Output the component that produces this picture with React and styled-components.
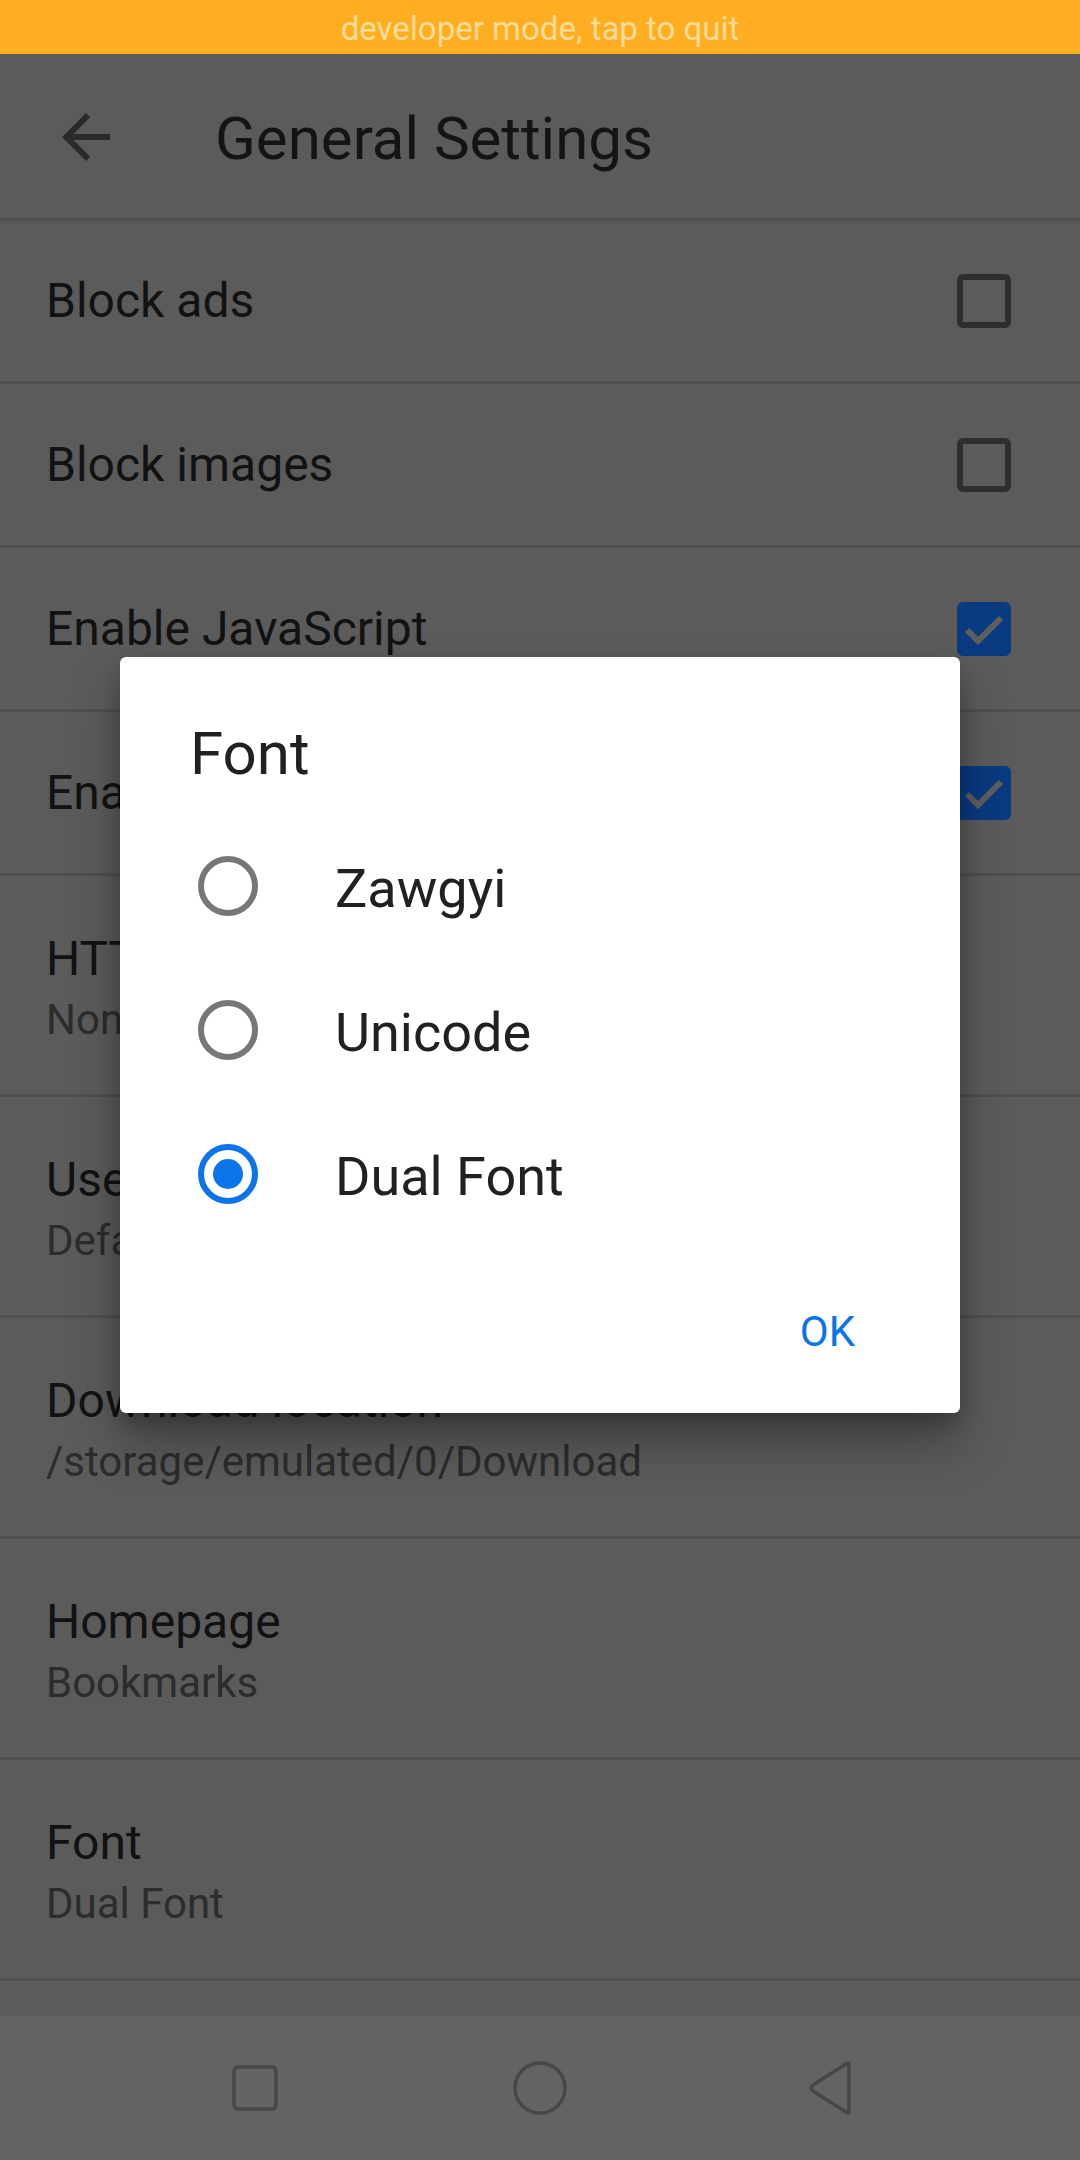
import React, { useState } from "react";
import styled, { createGlobalStyle } from "styled-components";

const GlobalStyle = createGlobalStyle`
  html, body {
    margin: 0;
    padding: 0;
    background: #5b5b5b;
  }
  * {
    box-sizing: border-box;
  }
  body {
    font-family: Roboto, "Noto Sans", "Liberation Sans", sans-serif;
  }
`;

const rows = [
  { title: "Block ads", checked: false },
  { title: "Block images", checked: false },
  { title: "Enable JavaScript", checked: true },
  { title: "Enable cookies", checked: true },
  { title: "HTTP proxy", summary: "None" },
  { title: "User agent", summary: "Default" },
  { title: "Download location", summary: "/storage/emulated/0/Download" },
  { title: "Homepage", summary: "Bookmarks" },
  { title: "Font", summary: "Dual Font" },
];

const fonts = ["Zawgyi", "Unicode", "Dual Font"];

const BackArrow = () => (
  <svg width="72" height="72" viewBox="0 0 24 24">
    <path
      fill="#2a2a2a"
      d="M20 11H7.83l5.59-5.59L12 4l-8 8 8 8 1.41-1.41L7.83 13H20v-2z"
    />
  </svg>
);

const CheckMark = () => (
  <svg width="42" height="42" viewBox="0 0 42 42">
    <polyline
      points="4,22 15,33 38,10"
      fill="none"
      stroke="#5e5e5e"
      strokeWidth="6"
    />
  </svg>
);

const App = () => {
  const [font, setFont] = useState("Dual Font");

  return (
    <Screen>
      <GlobalStyle />
      <DevBar>developer mode, tap to quit</DevBar>
      <Toolbar>
        <IconButton>
          <BackArrow />
        </IconButton>
        <Title>General Settings</Title>
      </Toolbar>
      <List>
        {rows.map((row) => (
          <Row key={row.title} tall={!!row.summary}>
            <RowText>
              <RowTitle>{row.title}</RowTitle>
              {row.summary && <RowSummary>{row.summary}</RowSummary>}
            </RowText>
            {row.checked !== undefined && (
              <Checkbox checked={row.checked}>
                {row.checked && <CheckMark />}
              </Checkbox>
            )}
          </Row>
        ))}
      </List>
      <NavBar>
        <NavKey space={185}>
          <svg width="48" height="48" viewBox="0 0 48 48">
            <rect x="3" y="3" width="42" height="42" rx="4" fill="none" stroke="#474747" strokeWidth="3.5" />
          </svg>
        </NavKey>
        <NavKey space={190}>
          <svg width="56" height="56" viewBox="0 0 56 56">
            <circle cx="28" cy="28" r="25" fill="none" stroke="#474747" strokeWidth="3.5" />
          </svg>
        </NavKey>
        <NavKey>
          <svg width="50" height="56" viewBox="0 0 50 56">
            <path
              d="M44 5 L44 51 Q44 55 41 52 L8 31 Q4 28 8 25 L41 4 Q44 2 44 5 Z"
              fill="none"
              stroke="#474747"
              strokeWidth="3.5"
              strokeLinejoin="round"
            />
          </svg>
        </NavKey>
      </NavBar>

      <Overlay>
        <Dialog>
          <DialogTitle>Font</DialogTitle>
          <Options>
            {fonts.map((name) => (
              <Option key={name} onClick={() => setFont(name)}>
                <Radio selected={font === name}>
                  {font === name && <RadioDot />}
                </Radio>
                <OptionLabel>{name}</OptionLabel>
              </Option>
            ))}
          </Options>
          <Actions>
            <TextButton>OK</TextButton>
          </Actions>
        </Dialog>
      </Overlay>
    </Screen>
  );
};

export default App;

const Screen = styled.div`
  position: relative;
  width: 1080px;
  height: 2160px;
  display: flex;
  flex-direction: column;
  overflow: hidden;
  background: #5b5b5b;
`;

const DevBar = styled.div`
  height: 54px;
  padding-top: 3px;
  line-height: 51px;
  text-align: center;
  background: #ffae21;
  color: #ffdc97;
  font-size: 33px;
`;

const Toolbar = styled.header`
  height: 166px;
  display: flex;
  align-items: center;
  padding-left: 50px;
  border-bottom: 2px solid #4e4e4e;
  box-shadow: 0 1px 2px rgba(0, 0, 0, 0.15);
  position: relative;
  z-index: 1;
`;

const IconButton = styled.div`
  width: 72px;
  height: 72px;
  display: flex;
  margin-top: 2px;
`;

const Title = styled.h1`
  margin: 0 0 0 93px;
  padding-top: 6px;
  font-size: 60px;
  font-weight: 400;
  line-height: 72px;
  color: #141414;
`;

const List = styled.div`
  flex: 1;
  overflow: hidden;
`;

const Row = styled.div`
  height: ${(p) => (p.tall ? "221px" : "164px")};
  display: flex;
  align-items: ${(p) => (p.tall ? "flex-start" : "center")};
  padding: ${(p) => (p.tall ? "55px 69px 0 46px" : "0 69px 0 46px")};
  border-bottom: 3px solid #505050;
`;

const RowText = styled.div`
  flex: 1;
  display: flex;
  flex-direction: column;
`;

const RowTitle = styled.div`
  font-size: 48px;
  line-height: 56px;
  color: #121212;
`;

const RowSummary = styled.div`
  margin-top: 5px;
  font-size: 42px;
  line-height: 56px;
  color: #2c2c2c;
`;

const Checkbox = styled.span`
  width: 54px;
  height: 54px;
  border-radius: 6px;
  border: 6px solid ${(p) => (p.checked ? "#0a3a80" : "#2e2e2e")};
  background: ${(p) => (p.checked ? "#0a3a80" : "transparent")};
  display: flex;
  align-items: center;
  justify-content: center;
`;

const NavBar = styled.nav`
  height: 144px;
  flex-shrink: 0;
  background: #636363;
  display: flex;
  align-items: center;
  justify-content: center;
  padding-left: 5px;
`;

const NavKey = styled.div`
  width: 100px;
  margin-right: ${(p) => p.space || 0}px;
  display: flex;
  justify-content: center;
`;

const Overlay = styled.div`
  position: absolute;
  top: 54px;
  bottom: 144px;
  left: 0;
  right: 0;
  display: flex;
  align-items: center;
  justify-content: center;
  z-index: 2;
`;

const Dialog = styled.div`
  width: 840px;
  background: #ffffff;
  border-radius: 6px;
  box-shadow: 0 30px 50px rgba(0, 0, 0, 0.3), 0 10px 18px rgba(0, 0, 0, 0.18);
`;

const DialogTitle = styled.div`
  padding: 61px 70px 0;
  font-size: 60px;
  line-height: 72px;
  color: #212121;
`;

const Options = styled.div`
  margin-top: 24px;
`;

const Option = styled.div`
  height: 144px;
  display: flex;
  align-items: center;
  padding-left: 78px;
  cursor: pointer;
`;

const Radio = styled.span`
  width: 60px;
  height: 60px;
  border-radius: 50%;
  border: 6px solid ${(p) => (p.selected ? "#0b74e9" : "#777777")};
  display: flex;
  align-items: center;
  justify-content: center;
  flex-shrink: 0;
`;

const RadioDot = styled.span`
  width: 30px;
  height: 30px;
  border-radius: 50%;
  background: #0b74e9;
`;

const OptionLabel = styled.span`
  margin-left: 77px;
  padding-top: 6px;
  font-size: 54px;
  line-height: 64px;
  color: #212121;
`;

const Actions = styled.div`
  display: flex;
  justify-content: flex-end;
  padding: 31px 81px 28px 0;
`;

const TextButton = styled.button`
  height: 108px;
  padding: 0 24px;
  border: none;
  background: none;
  font-family: inherit;
  font-size: 42px;
  font-weight: 400;
  color: #0b74e9;
  text-transform: uppercase;
`;
